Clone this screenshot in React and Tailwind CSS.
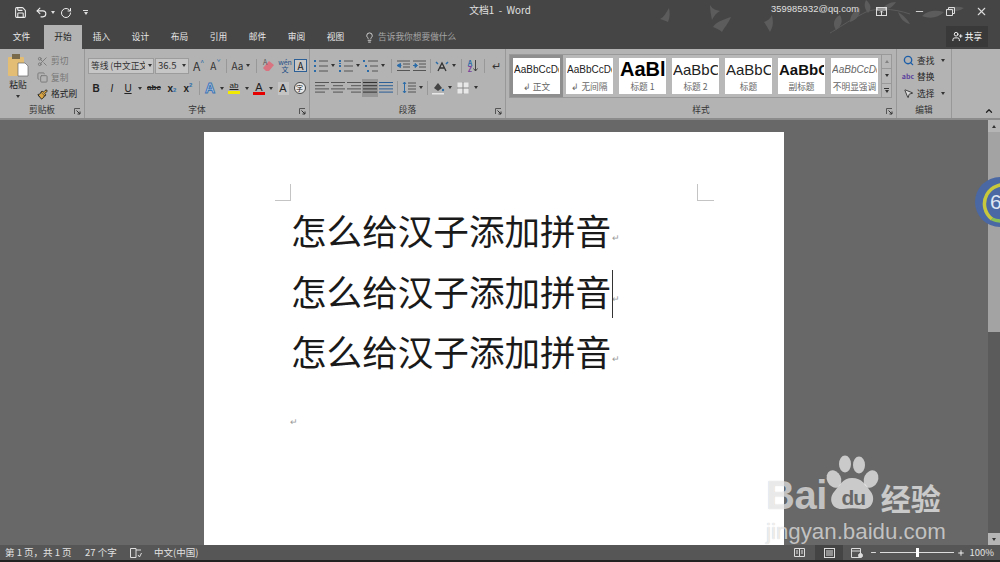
import { Save, Undo2, RotateCw, Lightbulb, Scissors, Copy, Search, X, Minus, Plus, UserPlus, MousePointer2, Paintbrush, ChevronUp } from "lucide-react";

const cjk = { fontFamily: '"Noto Sans CJK SC", "Noto Sans", sans-serif' };

function Caret({ className = "" }) {
    return <span className={"inline-block w-0 h-0 border-x-[2.5px] border-x-transparent border-t-[3px] border-t-[#333] " + className} />;
}

function Launcher() {
    return (
        <svg width="7" height="7" viewBox="0 0 7 7" className="absolute right-[3px] bottom-[3px]">
            <path d="M0.5 6V0.5H6" stroke="#555" fill="none" />
            <path d="M2.5 2.5L6 6M6 3.5V6H3.5" stroke="#333" fill="none" />
        </svg>
    );
}

function Lines({ rows, color = "#555" }) {
    return (
        <svg width="15" height="13" viewBox="0 0 15 13">
            {rows.map((r, i) => (
                <line key={i} x1={r[0]} x2={r[1]} y1={1.5 + i * 3.2} y2={1.5 + i * 3.2} stroke={color} strokeWidth="1" />
            ))}
        </svg>
    );
}

function ListIcon({ nums, indent }) {
    const blue = "#2b6ca8";
    return (
        <svg width="15" height="14" viewBox="0 0 15 14">
            {[2, 7, 12].map((y, i) => (
                <g key={y}>
                    <rect x={indent ? i * 2 : 1} y={y - 1} width="2" height="2" fill={blue} />
                    <line x1={indent ? 5 + i * 2 : 6} x2="15" y1={y} y2={y} stroke="#555" />
                </g>
            ))}
            {nums && <line x1="1" x2="3" y1="4.5" y2="4.5" stroke={blue} />}
        </svg>
    );
}

function IndentIcon({ flip }) {
    return (
        <svg width="15" height="12" viewBox="0 0 15 12">
            <path d="M1 1H14M7 4H14M7 7H14M1 10.5H14" stroke="#555" />
            <path d={flip ? "M1 5.5H4M3 3.5L5.5 5.5L3 7.5Z" : "M2 5.5H5.5M4.5 3.5L1 5.5L4.5 7.5Z"} stroke="#2b6ca8" fill="#2b6ca8" />
        </svg>
    );
}

function Slot({ w = 16, children, className = "" }) {
    return (
        <div className={"flex items-center justify-center shrink-0 " + className} style={{ width: w }}>
            {children}
        </div>
    );
}

function SmallRow({ icon, label, dim, caret }) {
    return (
        <div className={"flex items-center gap-[3px] h-[16.5px] " + (dim ? "text-[#777]" : "text-[#222]")}>
            <span className="w-[12px] flex justify-center">{icon}</span>
            <span>{label}</span>
            {caret && <Caret className="ml-[4px]" />}
        </div>
    );
}

function Group({ w, label, launcher = true, children }) {
    return (
        <div className="relative h-full flex flex-col shrink-0 border-r border-[#989898]" style={{ width: w }}>
            <div className="h-[52px] mt-[2px]">{children}</div>
            <div className="text-center text-[8.7px] leading-[12px] text-[#333] mt-[1px]">{label}</div>
            {launcher && <Launcher />}
        </div>
    );
}

function ClipboardGroup() {
    return (
        <Group w={85} label="剪贴板">
            <div className="flex h-full">
                <div className="w-[36px] flex flex-col items-center pt-[3px]">
                    <svg width="21" height="23" viewBox="0 0 21 23">
                        <rect x="0" y="3" width="16" height="19" rx="1" fill="#e3bd74" />
                        <rect x="4" y="0" width="8" height="5" fill="#7a6a4c" />
                        <path d="M10 9H17L20 12V22H10Z" fill="#fff" stroke="#666" strokeWidth="0.7" />
                    </svg>
                    <span className="text-[8.7px] leading-[12px] mt-[2px] text-[#222]">粘贴</span>
                    <Caret className="mt-[4px]" />
                </div>
                <div className="flex flex-col text-[8.7px] leading-[16px] pt-[2px]">
                    <SmallRow dim label="剪切" icon={<Scissors size={11} color="#777" />} />
                    <SmallRow dim label="复制" icon={<Copy size={11} color="#777" />} />
                    <SmallRow label="格式刷" icon={<Paintbrush size={11} color="#222" fill="#d9a441" />} />
                </div>
            </div>
        </Group>
    );
}

function FontGroup() {
    return (
        <Group w={225} label="字体">
            <div className="flex items-center h-[22px] pl-[3px] mt-[3px] pt-[1px]">
                <div className="w-[66px] h-[16px] bg-[#c6c6c6] border border-[#9c9c9c] flex items-center pl-[2px] text-[8.7px] text-[#333] overflow-hidden whitespace-nowrap">
                    <span className="w-[54px] overflow-hidden">等线 (中文正文)</span>
                    <Caret className="ml-[3px]" />
                </div>
                <div className="w-[34px] h-[16px] ml-[1px] bg-[#c6c6c6] border border-[#9c9c9c] flex items-center pl-[2px] text-[9.5px] text-[#333]">
                    <span className="w-[22px]">36.5</span>
                    <Caret className="ml-[2px]" />
                </div>
                <Slot w={17} className="ml-[1px] text-[12px] text-[#333]">A<sup className="text-[#2b6ca8] text-[7px]">^</sup></Slot>
                <Slot w={17} className="text-[10px] text-[#333]">A<sup className="text-[#2b6ca8] text-[7px]">ˇ</sup></Slot>
                <div className="w-px h-[14px] bg-[#989898] mx-[2px]" />
                <Slot w={24} className="text-[10px] text-[#333] gap-[3px]">Aa<Caret /></Slot>
                <div className="w-px h-[14px] bg-[#989898] mx-[3px]" />
                <Slot w={17}>
                    <svg width="13" height="13" viewBox="0 0 13 13"><path d="M1 9L7 2L12 6L7 12H4Z" fill="#d9737f" /><text x="1" y="6" fontSize="7" fill="#555">A</text></svg>
                </Slot>
                <Slot w={16} className="flex-col text-[7px] leading-[7px] text-[#1d4f86]"><span>wén</span><span>文</span></Slot>
                <Slot w={15}>
                    <span className="w-[13px] h-[13px] border border-[#2b5f96] bg-[#c6c6c6] text-[10px] leading-[11px] text-center text-[#222]">A</span>
                </Slot>
            </div>
            <div className="flex items-center h-[24px] pl-[3px] font-['Liberation_Sans'] text-[#222]">
                <Slot className="font-bold text-[10px]">B</Slot>
                <Slot className="italic text-[10px]">I</Slot>
                <Slot className="underline text-[10px]">U</Slot>
                <Slot w={8}><Caret /></Slot>
                <Slot w={20} className="text-[8px] font-bold line-through">abc</Slot>
                <Slot w={16} className="text-[10px] font-bold">x<sub className="text-[#2b6ca8] text-[6px]">2</sub></Slot>
                <Slot w={16} className="text-[10px] font-bold">x<sup className="text-[#2b6ca8] text-[6px]">2</sup></Slot>
                <div className="w-px h-[14px] bg-[#989898] mx-[3px]" />
                <Slot w={14} className="text-[14px] font-bold text-[#c6d4e6] [-webkit-text-stroke:1px_#3f76b4]">A</Slot>
                <Slot w={9}><Caret /></Slot>
                <Slot w={16} className="flex-col">
                    <span className="text-[8px] leading-[8px] underline">ab</span>
                    <span className="w-[12px] h-[3px] bg-[#f2ea00] mt-[1px]" />
                </Slot>
                <Slot w={9}><Caret /></Slot>
                <Slot w={16} className="flex-col">
                    <span className="text-[11px] leading-[10px]">A</span>
                    <span className="w-[12px] h-[3px] bg-[#e60000]" />
                </Slot>
                <Slot w={8}><Caret /></Slot>
                <Slot w={16}><span className="bg-[#c4c4c4] w-[11px] h-[13px] text-[11px] leading-[13px] text-center">A</span></Slot>
                <Slot w={17}>
                    <span className="w-[12px] h-[12px] rounded-full border border-[#444] bg-[#e8e8e8] text-[7px] leading-[10px] text-center" style={cjk}>字</span>
                </Slot>
            </div>
        </Group>
    );
}

function ParagraphGroup() {
    return (
        <Group w={196} label="段落">
            <div className="flex items-center h-[22px] pl-[3px] pt-[7px]">
                <Slot w={15}><ListIcon /></Slot>
                <Slot w={10}><Caret /></Slot>
                <Slot w={15}><ListIcon nums /></Slot>
                <Slot w={10}><Caret /></Slot>
                <Slot w={15}><ListIcon indent /></Slot>
                <Slot w={10}><Caret /></Slot>
                <div className="w-px h-[14px] bg-[#989898] mx-[3px]" />
                <Slot w={16}><IndentIcon /></Slot>
                <Slot w={16}><IndentIcon flip /></Slot>
                <div className="w-px h-[14px] bg-[#989898] mx-[3px]" />
                <Slot w={15}>
                    <svg width="14" height="12" viewBox="0 0 14 12"><path d="M3 11L7 3L11 11M5 8H9" stroke="#333" fill="none" strokeWidth="1.3" /><path d="M1 2L3 4M13 2L11 4" stroke="#2b6ca8" strokeWidth="1.5" /></svg>
                </Slot>
                <Slot w={9}><Caret /></Slot>
                <div className="w-px h-[14px] bg-[#989898] mx-[3px]" />
                <Slot w={16} className="gap-[1px]">
                    <span className="flex flex-col text-[7px] leading-[6px] font-bold">
                        <span className="text-[#2b6ca8]">A</span>
                        <span className="text-[#7a3f9d]">Z</span>
                    </span>
                    <svg width="5" height="12" viewBox="0 0 5 12"><path d="M2.5 0V11M0.5 8.5L2.5 11L4.5 8.5" stroke="#444" fill="none" /></svg>
                </Slot>
                <div className="w-px h-[14px] bg-[#989898] mx-[3px]" />
                <Slot w={16} className="text-[11px] text-[#333]">↵</Slot>
            </div>
            <div className="flex items-center h-[19px] pl-[4px] mt-[5px]">
                <Slot><Lines rows={[[0, 14], [0, 10], [0, 14], [0, 10]]} /></Slot>
                <Slot><Lines rows={[[0, 14], [2, 12], [0, 14], [2, 12]]} /></Slot>
                <Slot><Lines rows={[[0, 14], [4, 14], [0, 14], [4, 14]]} /></Slot>
                <Slot className="h-[18px] bg-[#969696]"><Lines rows={[[0, 14], [0, 14], [0, 14], [0, 14]]} color="#333" /></Slot>
                <Slot><Lines rows={[[0, 14], [0, 14], [0, 14], [0, 14]]} color="#2b5f96" /></Slot>
                <div className="w-px h-[14px] bg-[#989898] mx-[3px]" />
                <Slot w={16}>
                    <svg width="14" height="13" viewBox="0 0 14 13"><path d="M2.5 1V12M1 3L2.5 1L4 3M1 10L2.5 12L4 10" stroke="#2b6ca8" fill="none" /><path d="M6 2H14M6 5H14M6 8H14M6 11H14" stroke="#555" /></svg>
                </Slot>
                <Slot w={8}><Caret /></Slot>
                <div className="w-px h-[14px] bg-[#989898] mx-[2px]" />
                <Slot w={16}>
                    <svg width="14" height="14" viewBox="0 0 14 14"><path d="M3 7L7 2L11 7L7 10Z" fill="#444" /><circle cx="12" cy="9" r="1.2" fill="#2b6ca8" /><rect x="1" y="12" width="12" height="1.5" fill="#e8e8e8" /></svg>
                </Slot>
                <Slot w={8}><Caret /></Slot>
                <Slot w={18}>
                    <svg width="12" height="12" viewBox="0 0 12 12"><rect x="0.5" y="0.5" width="11" height="11" fill="#e8e8e8" /><path d="M6 0V12M0 6H12" stroke="#888" /></svg>
                </Slot>
                <Slot w={8}><Caret /></Slot>
            </div>
        </Group>
    );
}

const styleItems = [
    { sample: "AaBbCcDd", label: "↲ 正文", cls: "text-[10px] text-[#222]" },
    { sample: "AaBbCcDd", label: "↲ 无间隔", cls: "text-[10px] text-[#222]" },
    { sample: "AaBl", label: "标题 1", cls: "text-[20px] font-bold text-black" },
    { sample: "AaBbC", label: "标题 2", cls: "text-[15px] text-[#222]" },
    { sample: "AaBbC", label: "标题", cls: "text-[15px] text-[#222]" },
    { sample: "AaBbC", label: "副标题", cls: "text-[15px] font-bold text-[#111]" },
    { sample: "AaBbCcDd", label: "不明显强调", cls: "text-[10px] italic text-[#666]" },
];

function StyleCard({ item, selected }) {
    return (
        <div className={"w-[53px] h-full shrink-0 flex items-center justify-center " + (selected ? "bg-[#8e8e8e]" : "")}>
            <div className="w-[47px] h-[36px] bg-white flex flex-col items-center overflow-hidden">
                <div className={"h-[23px] w-[45px] overflow-hidden whitespace-nowrap text-center leading-[23px] font-['Liberation_Sans'] " + item.cls}>{item.sample}</div>
                <div className="text-[8.7px] leading-[12px] text-[#666] whitespace-nowrap">{item.label}</div>
            </div>
        </div>
    );
}

function StylesGroup() {
    return (
        <Group w={391} label="样式">
            <div className="flex h-[44px] ml-[3px] mt-[3px] w-[383px] border border-[#999] bg-[#b8b8b8]">
                <div className="flex flex-1 overflow-hidden">
                    {styleItems.map((it, i) => <StyleCard key={i} item={it} selected={i === 0} />)}
                </div>
                <div className="w-[10px] flex flex-col border-l border-[#999] items-center">
                    <div className="flex-1 flex items-center"><Caret className="rotate-180 opacity-40" /></div>
                    <div className="flex-1 flex items-center border-y border-[#999] w-full justify-center"><Caret /></div>
                    <div className="flex-1 flex flex-col items-center justify-center"><span className="w-[5px] h-px bg-[#333] mb-[1px]" /><Caret /></div>
                </div>
            </div>
        </Group>
    );
}

function EditGroup() {
    return (
        <Group w={55} label="编辑" launcher={false}>
            <div className="flex flex-col text-[8.7px] pt-[1px] pl-[5px]">
                <SmallRow caret label="查找" icon={<Search size={11} color="#1d5ea8" strokeWidth={3} />} />
                <SmallRow label="替换" icon={<span className="text-[7px] leading-[7px] font-bold text-[#5a3f9d]">abc</span>} />
                <SmallRow caret label="选择" icon={<MousePointer2 size={11} color="#333" fill="#ddd" />} />
            </div>
        </Group>
    );
}

function Birds() {
    return (
        <svg width="340" height="34" viewBox="0 0 340 34" className="absolute left-[660px] top-0 pointer-events-none" fill="#5c5c5c">
            <path d="M0 19C4 17 6 13 9 8C10 13 10 17 8 22C6 21 3 20 0 19Z" />
            <path d="M50 5C52 8 54 10 60 11C56 13 54 16 52 20C51 15 50 10 50 5Z" />
            <path d="M53 27C56 22 62 20 71 17C68 24 64 28 62 32C60 30 56 28 53 27Z" />
            <path d="M104 22C107 21 110 19 112 15C113 21 114 25 110 32C108 28 106 25 104 22Z" />
            <path d="M170 33C176 30 186 22 206 12" stroke="#5c5c5c" fill="none" />
            <path d="M206 12C216 8 232 8 250 14" stroke="#5c5c5c" fill="none" />
            <path d="M176 30C172 24 174 18 180 15C183 20 182 26 176 30Z" />
            <path d="M190 22C190 16 194 10 200 8C201 14 197 20 190 22Z" />
            <path d="M208 13C204 8 204 4 206 0C211 4 212 9 208 13Z" />
            <path d="M222 10C224 5 230 2 236 2C233 7 228 10 222 10Z" />
            <path d="M238 12C242 14 248 20 250 24C244 23 240 18 238 12Z" />
            <path d="M262 16C268 10 276 10 284 12C278 18 270 19 262 16Z" />
            <path d="M286 10C292 6 298 6 304 8C298 12 292 12 286 10Z" />
        </svg>
    );
}

function TitleBar() {
    return (
        <div className="relative h-[25px] flex items-center text-[#e0e0e0] shrink-0">
            <Birds />
            <div className="w-[468px] flex items-center pl-[14px] shrink-0">
                <Save size={13} color="#eee" />
                <Undo2 size={13} color="#eee" className="ml-[8px]" />
                <Caret className="ml-[3px] border-t-[#ddd]" />
                <RotateCw size={12} color="#eee" className="ml-[5px]" />
                <div className="flex flex-col items-center ml-[11px]">
                    <span className="w-[5px] h-px bg-[#ddd] mb-[1px]" />
                    <Caret className="border-t-[#ddd]" />
                </div>
            </div>
            <div className="relative w-[64px] mb-[5px] text-[9.8px] text-center whitespace-pre">文档1  -  Word</div>
            <div className="relative ml-[239px] mb-[5px] text-[9.3px] w-[90px] font-['Liberation_Sans'] tracking-[0.1px]">359985932@qq.com</div>
            <svg width="11" height="9" viewBox="0 0 11 9" className="relative ml-[15px] mb-[3px]">
                <rect x="0.5" y="0.5" width="10" height="8" stroke="#ddd" fill="none" />
                <path d="M1 1H10V3H1ZM5.5 8V4M4 5.5L5.5 4L7 5.5" stroke="#ddd" fill="none" />
            </svg>
            <Minus size={11} color="#ddd" className="relative ml-[27px] mb-[3px]" />
            <svg width="9" height="9" viewBox="0 0 9 9" className="relative ml-[21px] mb-[3px]">
                <path d="M2.5 2V0.5H8.5V6.5H7M0.5 2.5H6.5V8.5H0.5Z" stroke="#ddd" fill="none" />
            </svg>
            <X size={13} color="#ddd" className="relative ml-[20px] mb-[3px]" />
        </div>
    );
}

const tabs = ["插入", "设计", "布局", "引用", "邮件", "审阅", "视图"];

function TabBar() {
    return (
        <div className="h-[24px] flex items-stretch text-[8.7px] text-[#e8e8e8] shrink-0">
            <div className="w-[39px] ml-[2px] mr-[3px] flex items-center justify-center">文件</div>
            <div className="w-[38px] bg-[#b3b3b3] text-[#222] flex items-center justify-center">开始</div>
            {tabs.map((t) => (
                <div key={t} className="w-[39px] flex items-center justify-center">{t}</div>
            ))}
            <div className="flex items-center ml-[9px] gap-[3px] text-[#a6a6a6]">
                <Lightbulb size={11} color="#ddd" />
                告诉我你想要做什么
            </div>
            <div className="ml-auto mr-[12px] mb-[2px] mt-[1px] w-[42px] bg-[#393939] flex items-center justify-center gap-[2px] text-white">
                <UserPlus size={11} color="#fff" />
                共享
            </div>
        </div>
    );
}

function Ribbon() {
    return (
        <div className="relative h-[71px] bg-[#b3b3b3] border-b-[2px] border-[#8c8c8c] flex shrink-0">
            <ClipboardGroup />
            <FontGroup />
            <ParagraphGroup />
            <StylesGroup />
            <EditGroup />
            <ChevronUp size={10} color="#222" strokeWidth={3} className="absolute right-[6px] bottom-[2px]" />
        </div>
    );
}

function Mark({ className = "" }) {
    return <span className={"ml-[1px] inline-block align-[4px] text-[9px] leading-none text-[#999] " + className}>↵</span>;
}

function Page() {
    const line = "怎么给汉子添加拼音";
    return (
        <div className="relative w-[580px] ml-[204px] mt-[12px] bg-white h-full shrink-0 pl-[87px] pt-[68px]">
            <span className="absolute left-[71px] top-[52px] w-[16px] h-[17px] border-r border-b border-[#c4c4c4]" />
            <span className="absolute left-[493px] top-[52px] w-[17px] h-[17px] border-l border-b border-[#c4c4c4]" />
            <div className="text-[35.6px] leading-[60.5px] text-[#1a1a1a] whitespace-nowrap">
                <div>{line}<Mark /></div>
                <div className="relative">
                    {line}<Mark />
                    <span className="absolute left-[321px] top-[9px] w-px h-[48px] bg-[#333]" />
                </div>
                <div>{line}<Mark /></div>
            </div>
            <div className="mt-[32px] ml-[-2px] leading-[16px]"><Mark className="ml-0" /></div>
        </div>
    );
}

function Scrollbar() {
    return (
        <div className="w-[12px] h-full bg-[#5b5b5b] ml-auto flex flex-col shrink-0">
            <div className="h-[12px] bg-[#b5b5b5] flex items-center justify-center"><Caret className="rotate-180" /></div>
            <div className="h-[200px] bg-[#a3a3a3]" />
            <div className="flex-1" />
            <div className="h-[12px] bg-[#b5b5b5] flex items-center justify-center"><Caret /></div>
        </div>
    );
}

function Badge() {
    return (
        <div className="absolute left-[975px] top-[177px] w-[50px] h-[50px] rounded-full bg-[#4a68a4] flex items-center">
            <svg width="50" height="50" viewBox="0 0 50 50" className="absolute left-0 top-0">
                <path d="M35 9A19 19 0 0 0 17 42" stroke="#c8c83c" strokeWidth="3.5" fill="none" />
                <path d="M17 42A19 19 0 0 0 25 44" stroke="#8cc152" strokeWidth="3.5" fill="none" />
            </svg>
            <span className="relative ml-[15px] text-[21px] text-[#dfe6f2] font-['Liberation_Sans']">6</span>
        </div>
    );
}

function Watermark() {
    const soft = "[text-shadow:0_0_1px_rgba(0,0,0,0.25)]";
    return (
        <div className="absolute left-[766px] top-[455px] w-[190px] text-white/65 pointer-events-none font-['Liberation_Sans']">
            <svg width="70" height="58" viewBox="0 0 70 58" className="absolute left-[50px] top-0" fill="currentColor">
                <ellipse cx="18" cy="24" rx="7" ry="9" transform="rotate(-25 18 24)" />
                <ellipse cx="29" cy="9" rx="6" ry="8.5" />
                <ellipse cx="43" cy="10" rx="6" ry="8.5" />
                <ellipse cx="55" cy="24" rx="7" ry="9" transform="rotate(25 55 24)" />
                <path d="M36 23C46 23 50 30 55 37C60 44 56 55 46 54C40 53 33 53 27 54C16 55 12 44 18 37C23 31 27 23 36 23Z" />
            </svg>
            <div className="relative h-[60px] flex items-end pb-[1px]">
                <span className={"text-[40px] leading-[38px] font-bold tracking-[-0.5px] " + soft}>Bai</span>
                <span className="relative ml-[5px] mb-[4px] w-[43px] text-center text-[21px] leading-[24px] font-bold text-[#686868] tracking-[-1px]">du</span>
                <span className="text-[30px] leading-[34px] font-bold ml-[6px] whitespace-nowrap" style={cjk}>经验</span>
            </div>
            <div className={"text-[22.3px] leading-[28px] mt-[3px] whitespace-nowrap " + soft}>jingyan.baidu.com</div>
        </div>
    );
}

function StatusBar() {
    return (
        <div className="h-[15px] bg-[#565656] flex items-center text-[9.5px] text-[#e2e2e2] shrink-0 pl-[5px]">
            <span className="w-[80px] whitespace-nowrap">第 1 页，共 1 页</span>
            <span className="w-[45px]">27 个字</span>
            <svg width="12" height="10" viewBox="0 0 12 10"><path d="M0.5 0.5H6V9.5H0.5ZM6 2H11M8 7L9.5 9L11.5 5" stroke="#ddd" fill="none" /></svg>
            <span className="ml-[12px]">中文(中国)</span>
            <div className="ml-auto flex items-center h-full">
                <svg width="11" height="9" viewBox="0 0 11 9" fill="none" stroke="#ddd"><path d="M0.5 0.5H5.5V8.5H0.5ZM5.5 0.5H10.5V8.5H5.5Z" /><path d="M2 3H4M7 3H9M2 5H4M7 5H9" /></svg>
                <div className="w-[28px] h-full ml-[10px] bg-[#444] flex items-center justify-center">
                    <svg width="11" height="10" viewBox="0 0 11 10" fill="none" stroke="#ddd"><rect x="0.5" y="0.5" width="10" height="9" /><path d="M2 3H9M2 5H9M2 7H9" /></svg>
                </div>
                <svg width="12" height="10" viewBox="0 0 12 10" fill="none" stroke="#ddd" className="ml-[8px]"><path d="M0.5 0.5H9.5V9.5H0.5ZM0.5 3H9.5" /><circle cx="9.5" cy="7.5" r="2" fill="#ddd" /></svg>
                <Minus size={7} color="#eee" strokeWidth={3} className="ml-[7px]" />
                <div className="relative w-[74px] h-px bg-[#ddd] mx-[3px] flex items-center">
                    <span className="absolute left-[36px] w-[3px] h-[9px] bg-white" />
                </div>
                <Plus size={8} color="#eee" strokeWidth={3} />
                <span className="ml-[4px] mr-[6px]">100%</span>
            </div>
        </div>
    );
}

export default function App() {
    return (
        <div className="relative w-[1000px] h-[562px] overflow-hidden bg-[#222] flex flex-col" style={cjk}>
            <div className="bg-[#454545] shrink-0">
                <TitleBar />
                <TabBar />
            </div>
            <Ribbon />
            <div className="h-[425px] bg-[#686868] flex overflow-hidden shrink-0">
                <Page />
                <Scrollbar />
            </div>
            <StatusBar />
            <Badge />
            <Watermark />
        </div>
    );
}
